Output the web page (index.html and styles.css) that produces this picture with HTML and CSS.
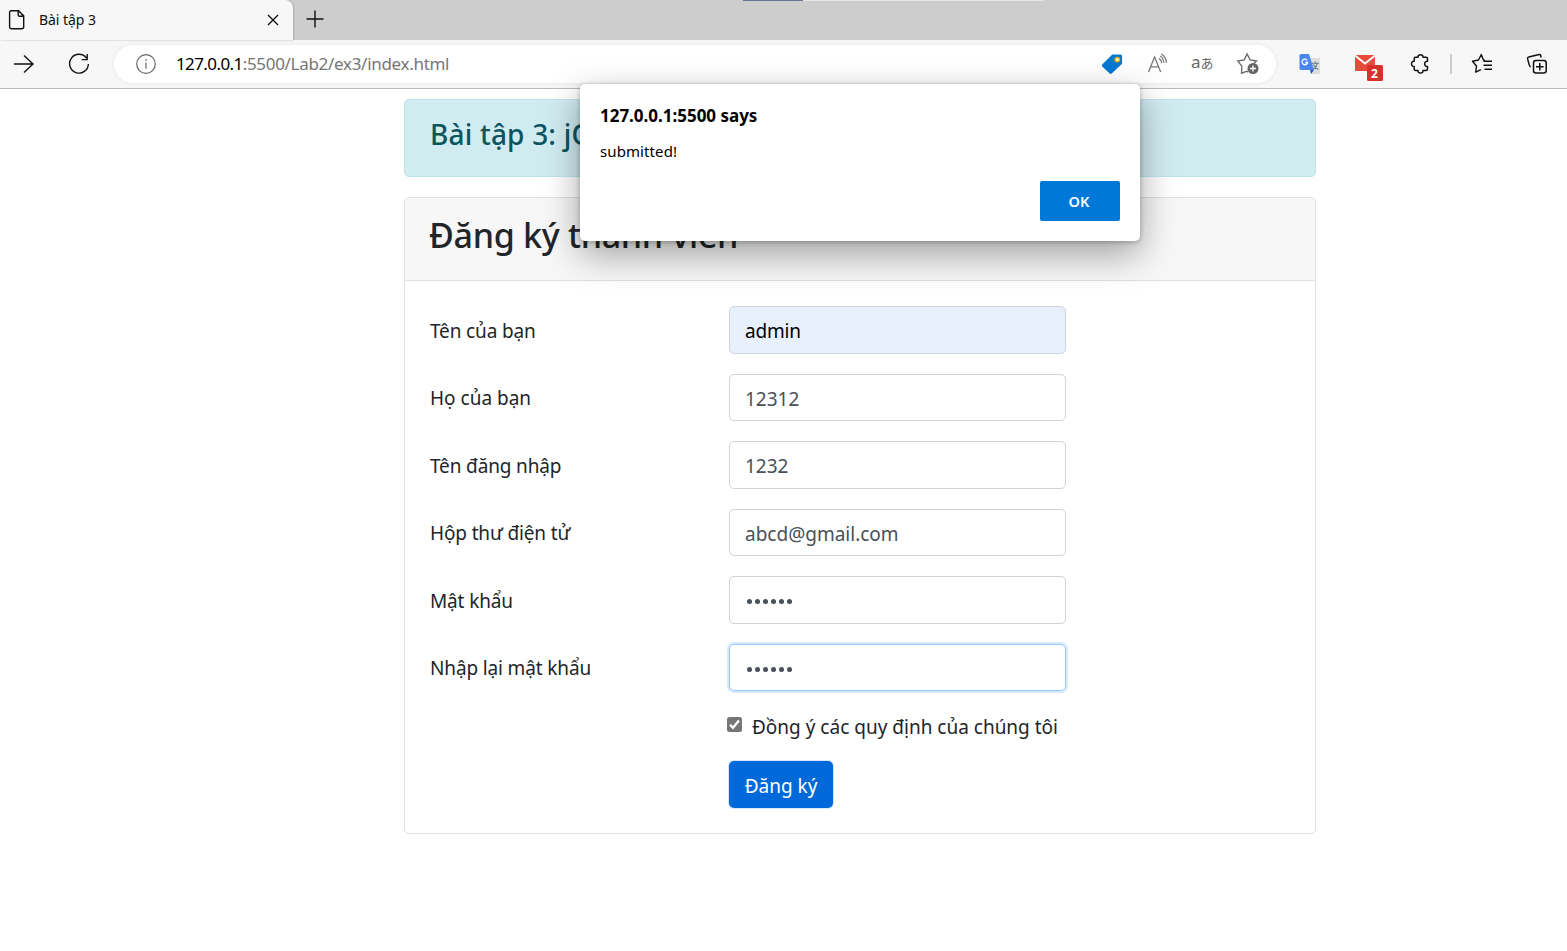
FILE: index.html
```html
<!DOCTYPE html>
<html lang="vi">
<head>
<meta charset="utf-8">
<title>Bài tập 3</title>
<link rel="stylesheet" href="styles.css">
</head>
<body>
<div class="tabstrip">
  <div class="tab">
    <svg class="page-icon" width="18" height="22" viewBox="0 0 18 22" fill="none" stroke="#111" stroke-width="1.4"><path d="M3.3 1.7h7.2l5.2 5.2v10.9a2 2 0 0 1-2 2H3.6a2 2 0 0 1-2-2V3.4a1.7 1.7 0 0 1 1.7-1.7zM10.2 1.8v3.9c0 .9.6 1.5 1.5 1.5h3.9"/></svg>
    <span class="tab-title">Bài tập 3</span>
    <svg class="close" width="12" height="12" viewBox="0 0 12 12" stroke="#111" stroke-width="1.4"><path d="M1 1l10 10M11 1L1 11"/></svg>
  </div>
  <div class="newtab"><svg width="18" height="18" viewBox="0 0 18 18" stroke="#111" stroke-width="1.4"><path d="M9 .5v17M.5 9h17"/></svg></div>
  <div class="top-line"></div>
</div>
<div class="toolbar">
  <svg class="forward" width="22" height="20" viewBox="0 0 22 20" fill="none" stroke="#111" stroke-width="1.4"><path d="M1 10h19M11 1.5l9 8.5-9 8.5"/></svg>
  <svg class="reload" width="22" height="22" viewBox="0 0 22 22" fill="none" stroke="#111" stroke-width="1.4"><path d="M18.5 5A9.4 9.4 0 1 0 20.4 11M19.2 1v5.6h-5.6"/></svg>
  <div class="omnibox">
    <svg class="info" width="20" height="20" viewBox="0 0 20 20" fill="none" stroke="#666" stroke-width="1.2"><circle cx="10" cy="10" r="9.3"/><path d="M10 8.5v6.2M10 5v1.8"/></svg>
    <div class="url"><span class="host">127.0.0.1</span><span class="path">:5500/Lab2/ex3/index.html</span></div>
    <div class="omni-icons">
      <svg width="22" height="22" viewBox="0 0 22 22"><path d="M11.3 1.4h8q1.8 0 1.8 1.8v7.5L10.7 20.5q-1 .9-2 0L1.2 13.6q-1-.9 0-2z" fill="#0078d4"/><circle cx="16.3" cy="6.6" r="2.2" fill="#fff" stroke="#e3b008" stroke-width="1.5"/></svg>
      <svg class="read-aloud" width="22" height="22" viewBox="0 0 22 22" fill="none" stroke="#777" stroke-width="1.3"><path d="M1.5 19L7.6 4l6.1 15M3.6 13.8h8M12 5.2q2.5 1.8 2.8 5M13.2 3q3.2 2 3.7 6.8M14.3 1q4.5 2.6 5.2 8.6"/></svg>
      <span class="translate">a<small>あ</small></span>
      <svg width="24" height="24" viewBox="0 0 24 24"><path d="M12 21.2l-1-1-5.5 2 .4-6.800L1.800 10l6.400-1.100L11.100 3l3 5.900L20.600 10l-3 2.800" transform="translate(0 -1)" fill="none" stroke="#666" stroke-width="1.300"/><circle cx="17" cy="16.500" r="5.500" fill="#666"/><path d="M17 13.500v6M14 16.500h6" stroke="#fff" stroke-width="1.300"/></svg>
    </div>
  </div>
  <div class="extensions">
    <svg width="22" height="22" viewBox="0 0 22 22"><path d="M8 5h13v16H12z" fill="#dedede"/><path d="M2 1h8l5 16H2q-1.5 0-1.5-1.5V2.5Q.5 1 2 1z" fill="#4b86ee"/><path d="M11 17h4l-3 4z" fill="#3058c9"/><path d="M8.2 7.4a2.8 2.8 0 1 0 .4 2.1H6.2" fill="none" stroke="#fff" stroke-width="1.3"/><path d="M12.8 10.2h7M16.3 8.5v1.7M18.3 10.5q-1 4-4.2 6M14.3 11.5q1.7 3.6 5 5" fill="none" stroke="#607d87" stroke-width="1.1"/></svg>
    <svg class="mail" width="30" height="30" viewBox="0 0 30 30"><path d="M1 2h20v16H1z" fill="#e64b3b"/><path d="M1 2.500l10 8 10-8" fill="none" stroke="#fff" stroke-width="2"/><path d="M2.500 2h17L11 8.600z" fill="#e64b3b"/><rect x="13" y="12" width="16" height="16" rx="1.500" fill="#d9302f"/><text x="20.500" y="24.500" text-anchor="middle" class="badge">2</text></svg>
    <svg width="22" height="22" viewBox="0 0 22 22" fill="none" stroke="#111" stroke-width="1.5" stroke-linejoin="round"><path d="M6.700 4.200H9C8.600 .9 14.400 .9 14 4.200h3q1.500 0 1.500 1.500v2.600c-3.800-.2-3.800 5.400 0 5.200v2.600q0 1.500-1.500 1.500h-3c.4 3.300-5.400 3.300-5 0H6.700q-1.500 0-1.500-1.500v-2.600c-3.600.2-3.600-5.400 0-5.200V5.700q0-1.500 1.500-1.500z"/></svg>
    <div class="divider"></div>
    <svg width="22" height="22" viewBox="0 0 22 22" fill="none" stroke="#111" stroke-width="1.4" stroke-linejoin="round"><path d="M14 7.500l-1.600-.6L10.300 1.500 7.500 7 1.500 8.200l4 4.800-.8 6.200 5.200-2.500M12.500 8.300H21M12.500 12.300H21M13.500 16.300H21"/></svg>
    <svg width="22" height="22" viewBox="0 0 22 22" fill="none" stroke="#111" stroke-width="1.500"><rect x="7.500" y="7.500" width="12.700" height="12.500" rx="2.500"/><path d="M13.800 10v7.500M10 13.800h7.600M15.200 4.500l-.5-2q-.4-1.200-1.700-.9L2.800 4Q1.300 4.400 1.600 5.900l1.600 6q.4 1.500 1.700 2"/></svg>
  </div>
</div>
<main class="container">
  <div class="alert"><h2>Bài tập 3: jQ</h2></div>
  <section class="card">
    <header class="card-header"><h1>Đăng ký thành viên</h1></header>
    <form class="card-body">
      <div class="row"><span class="label tight">Tên của bạn</span><div class="field filled">admin</div></div>
      <div class="row"><span class="label">Họ của bạn</span><div class="field low">12312</div></div>
      <div class="row"><span class="label tight">Tên đăng nhập</span><div class="field">1232</div></div>
      <div class="row"><span class="label tight">Hộp thư điện tử</span><div class="field low">abcd@gmail.com</div></div>
      <div class="row"><span class="label tight">Mật khẩu</span><div class="field dots"><i></i><i></i><i></i><i></i><i></i><i></i></div></div>
      <div class="row"><span class="label tight">Nhập lại mật khẩu</span><div class="field dots low focus"><i></i><i></i><i></i><i></i><i></i><i></i></div></div>
      <div class="agree"><svg width="15" height="15" viewBox="0 0 15 15"><rect width="15" height="15" rx="2.500" fill="#767676"/><path d="M3 7.800l3 3L12 3.500" fill="none" stroke="#fff" stroke-width="2.300"/></svg><span>Đồng ý các quy định của chúng tôi</span></div>
      <div class="submit">Đăng ký</div>
    </form>
  </section>
</main>
<div class="dialog">
  <div class="dialog-title">127.0.0.1:5500 says</div>
  <div class="dialog-text">submitted!</div>
  <div class="ok">OK</div>
</div>
</body>
</html>
```
FILE: styles.css
```css
* { box-sizing: border-box; }
body { margin: 0; height: 951px; overflow: hidden; background: #fff; color: #212529; font-family: "Noto Sans", "Open Sans", sans-serif; font-size: 19px; white-space: nowrap; }
svg { display: block; flex: none; }
.tabstrip { height: 40px; background: #cdcdcd; display: flex; }
.tab { width: 293px; height: 40px; background: #f7f7f7; border-radius: 0 8px 0 0; display: flex; align-items: center; padding-left: 8px; box-shadow: 1px 0 2px #aaa; }
.tab-title { font-size: 14px; color: #111; margin: -2px 0 0 13px; width: 228px; letter-spacing: -0.05px; }
.newtab { width: 44px; padding: 10px 0 0 13px; }
.top-line { width: 301px; height: 1px; margin-left: 406px; background: linear-gradient(90deg, #66758f 60px, #e5e5e5 60px); }
.toolbar { height: 49px; background: #f7f7f7; border-bottom: 1px solid #b9b9b9; display: flex; align-items: center; padding-left: 13px; }
.forward { margin-top: -1px; }
.reload { margin-left: 33px; }
.omnibox { width: 1162px; height: 38px; margin-left: 24px; background: #fff; border-radius: 19px; box-shadow: 0 0 4px #e7e7e7; display: flex; align-items: center; padding: 0 16px 0 22px; }
.url { font-size: 17px; margin: -2px 0 0 20px; flex: 1; }
.host { color: #000; letter-spacing: -0.6px; }
.path { color: #767676; letter-spacing: -0.3px; }
.omni-icons { display: flex; align-items: center; gap: 23px; }
.read-aloud { position: relative; left: 1px; }
.translate { font: 17px/20px "Noto Sans", "Noto Sans CJK JP", sans-serif; color: #666; width: 22px; margin-top: -4px; letter-spacing: 0; }
.translate small { font-size: 13px; }
.extensions { display: flex; align-items: center; margin-left: 23px; }
.mail { margin: 8px 0 0 33px; }
.mail + svg { margin-left: 25px; }
.badge { font: bold 12px "Noto Sans", sans-serif; fill: #fff; }
.divider { width: 2px; height: 20px; background: #ccc; margin: 0 19px 0 19px; }
.divider + svg { margin-right: 33px; }
.container { width: 912px; margin: 10px 0 0 404px; }
.alert { height: 78px; padding: 14px 25px; color: #0c5460; background: #d1ecf1; border: 1px solid #bee5eb; border-radius: 5px; }
h2 { margin: 0; font-size: 28px; line-height: 40px; font-weight: 500; letter-spacing: 0.2px; }
.card { height: 637px; margin-top: 20px; border: 1px solid #dfdfdf; border-radius: 5px; }
.card-header { height: 83px; padding: 14px 25px; background: #f7f7f7; border-bottom: 1px solid #dfdfdf; border-radius: 4px 4px 0 0; }
h1 { margin: 0 0 0 -1px; font-size: 34px; line-height: 46px; font-weight: 500; letter-spacing: -0.3px; }
.card-body { padding: 25px; }
.row { display: flex; height: 47.5px; margin-bottom: 20px; align-items: center; }
.label { width: 299px; padding-top: 2px; }
.tight { letter-spacing: -0.14px; }
.field { width: 337px; height: 47.5px; padding: 2px 15px 0; border: 1px solid #ced4da; border-radius: 5px; display: flex; align-items: center; color: #495057; }
.low { padding-top: 4px; }
.filled { background: #e8f0fe; color: #000; letter-spacing: -0.2px; }
.dots { padding-left: 17px; padding-top: 3px; gap: 3.1px; }
.dots.low { padding-top: 4px; }
.dots i { width: 5px; height: 5px; border-radius: 50%; background: #495057; }
.focus { border-color: #99c8fb; box-shadow: 0 0 0 2px #d9eaff; }
.agree { display: flex; margin: 0 0 0 297px; padding-top: 6px; height: 50px; }
.agree span { margin-left: 10px; line-height: 20px; }
.submit { width: 104px; height: 47px; margin-left: 299px; border-radius: 5px; background: #0069d9; color: #fff; display: flex; align-items: center; justify-content: center; padding-top: 3px; box-shadow: 0 0 0 1px #d4e7ff; }
.dialog { position: absolute; left: 580px; top: 84px; width: 560px; height: 157px; padding: 20px; background: #fff; border-radius: 5px; box-shadow: 0 13px 36px rgba(0,0,0,.36), 0 1px 5px rgba(0,0,0,.25); color: #000; }
.dialog-title { font-size: 17px; line-height: 23px; height: 24px; font-weight: 700; letter-spacing: -0.02px; }
.dialog-text { font-size: 15px; line-height: 22px; margin-top: 12px; letter-spacing: 0.1px; }
.ok { width: 80px; height: 40px; margin: 19px 0 0 auto; padding-right: 2px; background: #0078d7; color: #fff; border-radius: 2px; font-size: 14.5px; line-height: 40px; text-align: center; font-weight: 600; }
```
